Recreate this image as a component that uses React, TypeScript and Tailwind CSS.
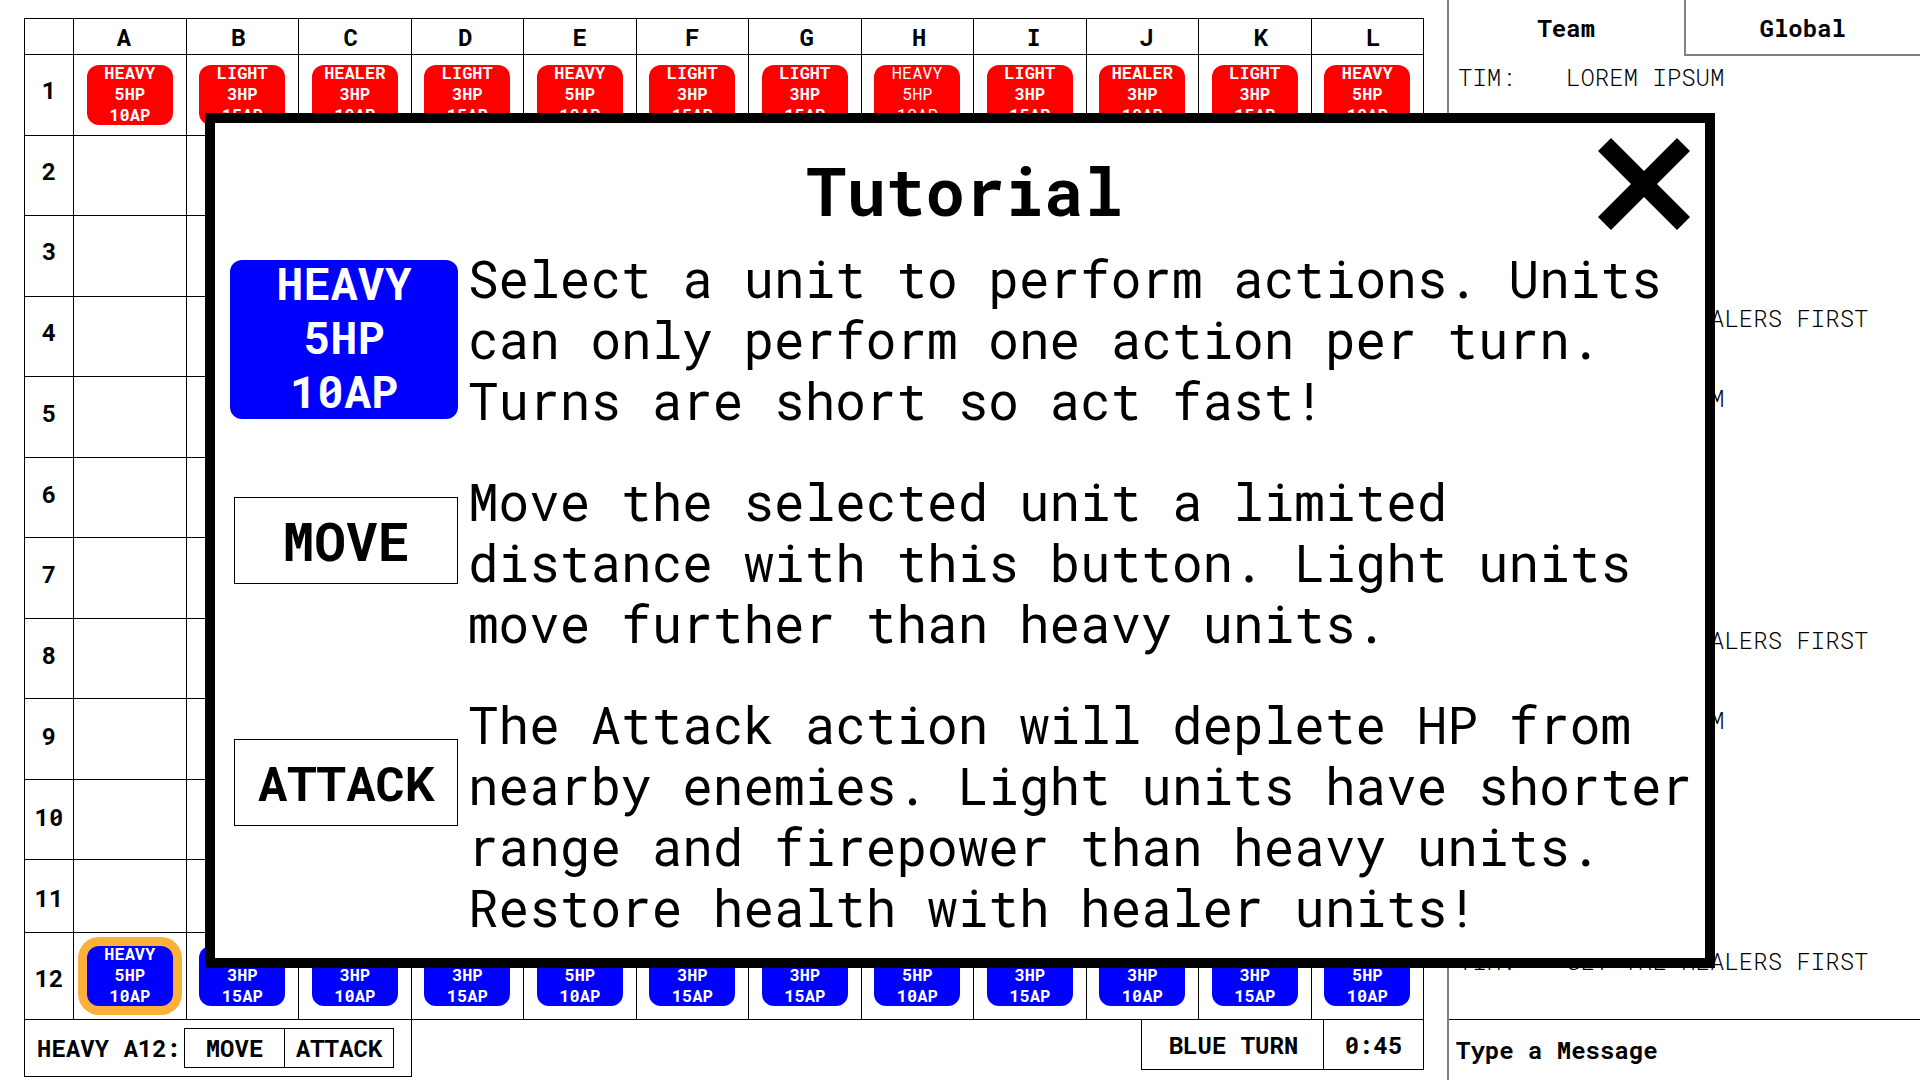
import { useState } from 'react';

type UnitKind = 'HEAVY' | 'LIGHT' | 'HEALER';

const UNIT_STATS: Record<UnitKind, { hp: string; ap: string }> = {
  HEAVY: { hp: '5HP', ap: '10AP' },
  LIGHT: { hp: '3HP', ap: '15AP' },
  HEALER: { hp: '3HP', ap: '10AP' },
};

const COLUMNS = [
  { name: 'A', align: 'pr-3' },
  { name: 'B', align: 'pr-2' },
  { name: 'C', align: 'pr-2' },
  { name: 'D', align: 'pr-1' },
  { name: 'E', align: '' },
  { name: 'F', align: '' },
  { name: 'G', align: 'pl-1' },
  { name: 'H', align: 'pl-1' },
  { name: 'I', align: 'pl-2' },
  { name: 'J', align: 'pl-2' },
  { name: 'K', align: 'pl-3' },
  { name: 'L', align: 'pl-3' },
];

const LINEUP: UnitKind[] = [
  'HEAVY', 'LIGHT', 'HEALER', 'LIGHT', 'HEAVY', 'LIGHT',
  'LIGHT', 'HEAVY', 'LIGHT', 'HEALER', 'LIGHT', 'HEAVY',
];

const ROWS = [
  { number: 1, height: 'h-[81px]', align: 'pb-2.5' },
  { number: 2, height: 'h-[80px]', align: 'pb-2.5' },
  { number: 3, height: 'h-[81px]', align: 'pb-2.5' },
  { number: 4, height: 'h-[80px]', align: 'pb-2.5' },
  { number: 5, height: 'h-[81px]', align: 'pb-2' },
  { number: 6, height: 'h-[80px]', align: 'pb-2' },
  { number: 7, height: 'h-[81px]', align: 'pb-2' },
  { number: 8, height: 'h-[80px]', align: 'pb-2' },
  { number: 9, height: 'h-[81px]', align: 'pb-1.5' },
  { number: 10, height: 'h-[80px]', align: 'pb-1.5' },
  { number: 11, height: 'h-[73px]', align: 'pt-1' },
  { number: 12, height: 'h-[87px]', align: 'pt-1' },
];

const MESSAGES = [
  'LOREM IPSUM', 'LOREM', 'LOREM', 'GET THE HEALERS FIRST',
  'LOREM IPSUM', 'LOREM', 'LOREM', 'GET THE HEALERS FIRST',
  'LOREM IPSUM', 'LOREM', 'LOREM', 'GET THE HEALERS FIRST',
];

function Unit({ kind, team, selected, acted }: { kind: UnitKind; team: 'red' | 'blue'; selected?: boolean; acted?: boolean }) {
  const stats = UNIT_STATS[kind];
  return (
    <button
      type="button"
      className={
        'mx-auto flex h-[60px] w-[86px] flex-col items-center justify-center rounded-xl pb-[3px] text-[17px] leading-[21px] text-white ' +
        (team === 'red' ? 'bg-[#ff0000] ' : 'bg-[#0000ff] ') +
        (acted ? 'font-normal ' : 'font-bold ') +
        (selected ? 'ring-[9px] ring-[#fbb03b]' : '')
      }
    >
      <span>{kind}</span>
      <span>{stats.hp}</span>
      <span>{stats.ap}</span>
    </button>
  );
}

function Board() {
  return (
    <table className="w-full table-fixed border-collapse">
      <thead>
        <tr className="h-9">
          <th className="w-[49px] border border-black p-0" aria-label="Row" />
          {COLUMNS.map((column) => (
            <th key={column.name} scope="col" className={'border border-black py-0 leading-6 ' + (column.align || 'px-0')}>
              {column.name}
            </th>
          ))}
        </tr>
      </thead>
      <tbody>
        {ROWS.map((row) => (
          <tr key={row.number} className={row.height}>
            <th scope="row" className={'border border-black px-0 leading-6 ' + row.align}>
              {row.number}
            </th>
            {LINEUP.map((kind, i) => (
              <td key={i} className="border border-black p-0">
                {row.number === 1 && <Unit kind={kind} team="red" acted={i === 7} />}
                {row.number === 12 && <Unit kind={kind} team="blue" selected={i === 0} />}
              </td>
            ))}
          </tr>
        ))}
      </tbody>
    </table>
  );
}

function StatusBar() {
  return (
    <div className="-mt-px flex items-start justify-between leading-6 font-bold">
      <div className="flex h-[58px] w-[388px] items-center border border-black pl-3">
        <span className="w-[147px] whitespace-nowrap">HEAVY A12:</span>
        <div className="flex h-10 border border-black">
          <button type="button" className="w-[100px] border-r border-black">MOVE</button>
          <button type="button" className="w-[108px]">ATTACK</button>
        </div>
      </div>
      <div className="flex h-[51px] border border-black text-center">
        <div className="flex w-[182px] items-center justify-center border-r border-black pl-0.5">BLUE TURN</div>
        <div className="flex w-[99px] items-center justify-center">0:45</div>
      </div>
    </div>
  );
}

function Chat() {
  return (
    <aside className="flex w-[473px] shrink-0 flex-col border-l-2 border-[#808080]">
      <div className="flex h-14 leading-6 font-bold">
        <button type="button" className="flex-1">Team</button>
        <button type="button" className="flex-1 border-b-2 border-l-2 border-[#808080] pt-0.5">Global</button>
      </div>
      <ul className="flex flex-1 flex-col justify-between pt-[9px] pb-[46px] pl-[9px]">
        {MESSAGES.map((text, i) => (
          <li key={i} className="flex leading-6 font-light">
            <span className="w-27">TIM:</span>
            <span>{text}</span>
          </li>
        ))}
      </ul>
      <input
        type="text"
        aria-label="Type a Message"
        placeholder="Type a Message"
        className="h-[61px] w-full border-t border-black pl-[7px] font-bold outline-none placeholder:text-black placeholder:opacity-100"
      />
    </aside>
  );
}

function Tutorial({ onClose }: { onClose: () => void }) {
  return (
    <div className="fixed inset-0 flex items-center px-[205px]">
      <section role="dialog" aria-labelledby="tutorial-title" className="relative w-full border-10 border-black bg-white pb-5 pl-[15px]">
        <button type="button" aria-label="Close tutorial" onClick={onClose} className="absolute top-[15px] right-[15px]">
          <svg viewBox="0 0 92 92" className="size-[92px]" aria-hidden="true">
            <path d="M13 0 46 33 79 0 92 13 59 46 92 79 79 92 46 59 13 92 0 79 33 46 0 13Z" />
          </svg>
        </button>
        <h1 id="tutorial-title" className="pt-8 pr-[5px] pb-[21px] text-center text-[66px] leading-[72px] font-bold">Tutorial</h1>
        <div className="flex flex-col gap-10 text-[51px] leading-[61px]">
          <div className="flex items-center gap-2.5">
            <div className="flex h-[159px] w-[228px] shrink-0 flex-col items-center justify-center rounded-xl bg-[#0000ff] pb-1 text-[45px] leading-[54px] font-bold text-white">
              <span>HEAVY</span>
              <span>5HP</span>
              <span>10AP</span>
            </div>
            <p>Select a unit to perform actions. Units can only perform one action per turn. Turns are short so act fast!</p>
          </div>
          <div className="flex items-start gap-2.5">
            <div className="w-[228px] shrink-0 pt-[26px] pl-1">
              <div className="flex h-[87px] items-center justify-center border border-black text-[53px] font-bold">MOVE</div>
            </div>
            <p>Move the selected unit a limited distance with this button. Light units move further than heavy units.</p>
          </div>
          <div className="flex items-start gap-2.5">
            <div className="w-[228px] shrink-0 pt-[45px] pl-1">
              <div className="flex h-[87px] items-center justify-center border border-black text-[49px] font-bold">ATTACK</div>
            </div>
            <p>The Attack action will deplete HP from nearby enemies. Light units have shorter range and firepower than heavy units. Restore health with healer units!</p>
          </div>
        </div>
      </section>
    </div>
  );
}

export default function App() {
  const [showTutorial, setShowTutorial] = useState(true);
  return (
    <div className="flex min-h-screen bg-white font-['Roboto_Mono','DejaVu_Sans_Mono',monospace] text-2xl text-black">
      <main className="flex-1 pt-[18px] pr-[23px] pl-6">
        <Board />
        <StatusBar />
      </main>
      <Chat />
      {showTutorial && <Tutorial onClose={() => setShowTutorial(false)} />}
    </div>
  );
}
